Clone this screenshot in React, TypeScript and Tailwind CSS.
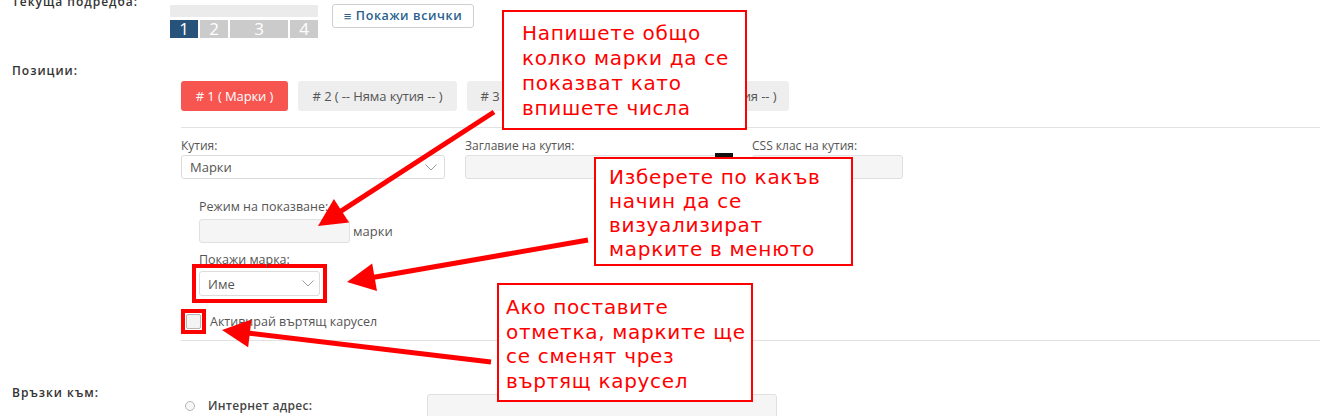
import React from 'react'

const tabs = [
  { label: '# 1 ( Марки )', w: 'w-[107px]', active: true },
  { label: '# 2 ( -- Няма кутия -- )', w: 'w-[159px]', active: false },
  { label: '# 3 ( -- Няма кутия -- )', w: 'w-[157px]', active: false },
  { label: '# 4 ( -- Няма кутия -- )', w: 'w-[155px]', active: false },
]

function Chevron() {
  return (
    <svg width="12" height="7" viewBox="0 0 12 7" className="shrink-0">
      <polyline points="0.5,0.5 6,6 11.5,0.5" fill="none" stroke="#9a9a9a" strokeWidth="1" />
    </svg>
  )
}

function Arrow({ tail, tip }: { tail: [number, number]; tip: [number, number] }) {
  const dx = tip[0] - tail[0]
  const dy = tip[1] - tail[1]
  const len = Math.hypot(dx, dy)
  const ux = dx / len
  const uy = dy / len
  const head = 28
  const half = 14
  const bx = tip[0] - ux * head
  const by = tip[1] - uy * head
  const px = -uy * half
  const py = ux * half
  return (
    <g>
      <line x1={tail[0]} y1={tail[1]} x2={bx + ux * 2} y2={by + uy * 2} stroke="#f00" strokeWidth="5" />
      <polygon points={`${tip[0]},${tip[1]} ${bx + px},${by + py} ${bx - px},${by - py}`} fill="#f00" />
    </g>
  )
}

export default function App() {
  return (
    <div className="relative h-[416px] w-[1320px] overflow-hidden bg-white font-['Open_Sans',sans-serif] text-[12px] leading-4 text-[#555]">
      {/* current layout */}
      <div className="flex h-[65px]">
        <div className="-mt-[6px] w-[170px] shrink-0 pl-3 font-semibold tracking-[1px] text-[#333]">Текуща подредба:</div>
        <div className="flex items-start">
          <div className="mt-[5px] w-[148px]">
            <div className="h-3 bg-[#ebebeb]" />
            <div className="mt-[3px] flex gap-[2px] text-[17px] leading-[18px] text-white">
              <div className="h-[18px] w-[28px] bg-[#27527a] text-center">1</div>
              <div className="h-[18px] w-[28px] bg-[#cbcbcb] text-center">2</div>
              <div className="h-[18px] w-[58px] bg-[#cbcbcb] text-center">3</div>
              <div className="h-[18px] w-[28px] bg-[#cbcbcb] text-center">4</div>
            </div>
          </div>
          <button className="ml-[14px] mt-1 flex h-6 w-[142px] items-center justify-center gap-1 rounded-[3px] border border-[#cfcfcf] bg-white text-[12.5px] font-semibold tracking-[0.6px] text-[#2b5f8e]">
            <span className="text-[13px]">≡</span> Покажи всички
          </button>
        </div>
      </div>

      {/* positions */}
      <div className="flex">
        <div className="-mt-[2px] w-[170px] shrink-0 pl-3 font-semibold tracking-[1px] text-[#333]">Позиции:</div>
        <div className="flex-1 pl-[11px]">
          <div className="mt-4 flex gap-[10px]">
            {tabs.map((t) => (
              <div
                key={t.label}
                className={
                  t.active
                    ? `flex h-[30px] ${t.w} items-center justify-center rounded-[3px] bg-[#f65550] text-[13px] tracking-[-0.1px] text-white`
                    : `flex h-[30px] ${t.w} items-center justify-center rounded-[3px] bg-[#eeeeee] text-[13px] tracking-[-0.1px] text-[#555]`
                }
              >
                {t.label}
              </div>
            ))}
          </div>
          <div className="mt-4 h-px bg-[#e2e2e2]" />

          <div className="mt-[10px] flex gap-5">
            <div className="w-[264px]">
              <div>Кутия:</div>
              <div className="mt-px flex h-6 items-center justify-between rounded-[3px] border border-[#dcdcdc] bg-white pl-2 pr-[7px] text-[13px]">
                Марки
                <Chevron />
              </div>
            </div>
            <div className="w-[267px]">
              <div>Заглавие на кутия:</div>
              <div className="mt-px h-6 rounded-[3px] border border-[#e0e0e0] bg-[#f5f5f5]" />
            </div>
            <div className="w-[151px]">
              <div>CSS клас на кутия:</div>
              <div className="mt-px h-6 rounded-[3px] border border-[#e0e0e0] bg-[#f5f5f5]" />
            </div>
          </div>

          <div className="ml-[18px] mt-5">
            <div className="text-[12.5px]">Режим на показване:</div>
            <div className="mt-1 flex items-center">
              <div className="h-6 w-[151px] rounded-[3px] border border-[#e0e0e0] bg-[#f5f5f5]" />
              <span className="ml-[3px] text-[13px]">марки</span>
            </div>
            <div className="mt-[9px] text-[12.5px]">Покажи марка:</div>
            <div className="-ml-[7px] -mt-[4px] w-[135px] border-4 border-[#f00] p-[3px]">
              <div className="flex h-[25px] items-center justify-between rounded-[3px] border border-[#dcdcdc] bg-white pl-2 pr-[5px] text-[13px]">
                Име
                <Chevron />
              </div>
            </div>
          </div>

          <div className="mt-[6px] flex items-center">
            <div className="border-4 border-[#f00] p-[1px]">
              <div className="h-[15px] w-[15px] rounded-[2px] border border-[#b5b5b5] bg-[#f3f3f3]" />
            </div>
            <span className="ml-[4px] text-[12.5px]">Активирай въртящ карусел</span>
          </div>
          <div className="mt-[6px] h-px bg-[#e2e2e2]" />
        </div>
      </div>

      {/* links */}
      <div className="flex">
        <div className="mt-[44px] w-[170px] shrink-0 pl-3 font-semibold tracking-[1px] text-[#333]">Връзки към:</div>
        <div className="mt-[53px] flex items-center">
          <div className="flex w-[257px] items-center pl-[15px]">
            <div className="h-[10px] w-[10px] rounded-full border border-[#b5b5b5] bg-[#f7f7f7]" />
            <span className="ml-[13px] font-semibold tracking-[0.3px] text-[#444]">Интернет адрес:</span>
          </div>
          <div className="h-6 w-[350px] rounded-[3px] border border-[#e0e0e0] bg-[#f5f5f5]" />
        </div>
      </div>

      {/* little dark marker behind the callout */}
      <div className="absolute left-[715px] top-[153px] h-[5px] w-[18px] bg-[#111]" />

      {/* arrows */}
      <svg className="pointer-events-none absolute left-0 top-0" width="1320" height="416">
        <Arrow tail={[494, 112]} tip={[318, 226]} />
        <Arrow tail={[588, 240]} tip={[347, 282]} />
        <Arrow tail={[491, 362]} tip={[222, 330]} />
      </svg>

      {/* callouts */}
      <div className="absolute left-[502px] top-[10px] h-[120px] w-[245px] whitespace-nowrap border-2 border-[#f00] bg-white pl-[18px] pt-[9px] font-['DejaVu_Sans',sans-serif] text-[20px] leading-[25px] tracking-[0.7px] text-[#f00]">
        Напишете общо<br />колко марки да се<br />показват като<br />впишете числа
      </div>
      <div className="absolute left-[594px] top-[157px] h-[109px] w-[259px] whitespace-nowrap border-2 border-[#f00] bg-white pl-[13px] pt-[6px] font-['DejaVu_Sans',sans-serif] text-[20px] leading-[24px] tracking-[0.7px] text-[#f00]">
        Изберете по какъв<br />начин да се<br />визуализират<br />марките в менюто
      </div>
      <div className="absolute left-[497px] top-[283px] h-[119px] w-[256px] whitespace-nowrap border-2 border-[#f00] bg-white pl-[7px] pt-[10px] font-['DejaVu_Sans',sans-serif] text-[20px] leading-[24.5px] tracking-[0.7px] text-[#f00]">
        Ако поставите<br />отметка, марките ще<br />се сменят чрез<br />въртящ карусел
      </div>
    </div>
  )
}
